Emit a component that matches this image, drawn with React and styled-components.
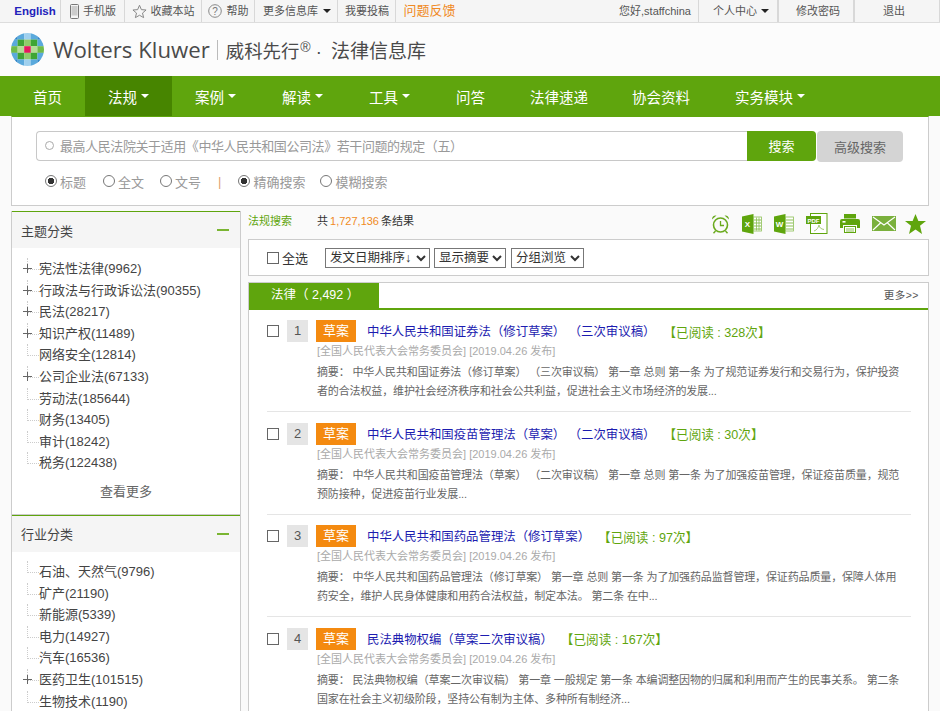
import React from "react";
import styled, { createGlobalStyle } from "styled-components";

const GlobalStyle = createGlobalStyle`
  html, body {
    margin: 0;
    padding: 0;
    height: 711px;
    overflow: hidden;
    background: #fafafa;
    font-family: "Liberation Sans", "Noto Sans CJK SC", sans-serif;
    font-size: 12px;
    color: #333;
    text-spacing-trim: space-all;
  }
  * { box-sizing: border-box; }
`;

const GREEN = "#5fa50d";

const TopBar = styled.div`
  height: 23px;
  background: #f5f5f5;
  border-bottom: 1px solid #ddd;
  display: flex;
  justify-content: space-between;
  font-size: 11px;
  line-height: 22px;
  color: #555;
`;

const TopGroup = styled.div`
  display: flex;
  height: 22px;
`;

const TopItem = styled.a`
  display: flex;
  align-items: center;
  justify-content: center;
  gap: ${props => props.$gap || 4}px;
  width: ${props => props.$w}px;
  padding: 0 ${props => props.$pr || 0}px 0 ${props => props.$pl || 0}px;
  border-right: ${props => (props.$plain ? "none" : "1px solid #d8d8d8")};
  border-left: ${props => (props.$left ? "1px solid #d8d8d8" : "none")};
  color: ${props => props.$color || "#555"};
  font-size: ${props => props.$size || 11}px;
  font-weight: ${props => (props.$bold ? 700 : 400)};
`;

const Caret = styled.i`
  display: inline-block;
  width: 0;
  height: 0;
  margin-left: ${props => props.$gap || 0}px;
  border-left: 4px solid transparent;
  border-right: 4px solid transparent;
  border-top: 4px solid ${props => props.$color || "#222"};
`;

const Header = styled.div`
  height: 53px;
  background: #fcfcfc;
  display: flex;
  align-items: center;
  padding-left: 11px;
`;

const Brand = styled.span`
  font-family: "Open Sans", "Liberation Sans", sans-serif;
  font-size: 22.2px;
  color: #4a4a4a;
  margin-left: 9px;
`;

const BrandRule = styled.span`
  width: 1px;
  height: 20px;
  background: #bbb;
  margin: 0 8px 0 7px;
`;

const BrandCn = styled.span`
  font-size: 18.4px;
  color: #4a4a4a;
  white-space: nowrap;
  sup {
    font-size: 14px;
    line-height: 0;
    vertical-align: 6px;
    margin: 0 0 0 1px;
  }
`;

const BrandName = styled.span`
  font-size: 19px;
  margin-left: 4px;
`;

const Nav = styled.nav`
  height: 40px;
  background: ${GREEN};
  display: flex;
  padding: 0 0 1px 10px;
  color: #fff;
  font-size: 14.5px;
`;

const NavItem = styled.a`
  display: flex;
  align-items: center;
  padding: 0 ${props => (props.$tight ? 22 : 23)}px;
  margin-bottom: -1px;
  background: ${props => (props.$active ? "#478500" : "transparent")};
  white-space: nowrap;
`;

const SearchPanel = styled.section`
  margin: 0 11px;
  height: 90px;
  background: #fff;
  border: 1px solid #ccc;
  border-top: 1px solid ${GREEN};
  padding: 14px 24px 0;
`;

const SearchRow = styled.div`
  display: flex;
  align-items: flex-start;
`;

const SearchBox = styled.div`
  flex: none;
  width: 711px;
  height: 30px;
  border: 1px solid #c8c8c8;
  border-right: none;
  border-radius: 4px 0 0 4px;
  display: flex;
  align-items: center;
  padding: 0 0 1px 8px;
  gap: 6px;
  color: #999;
  font-size: 13px;
  letter-spacing: -0.42px;
`;

const SearchGlass = styled.i`
  width: 9px;
  height: 9px;
  border: 1px solid #aaa;
  border-radius: 50%;
`;

const SearchBtn = styled.button`
  width: 69px;
  height: 30px;
  padding: 0 0 2px;
  border: none;
  border-radius: 0 4px 4px 0;
  background: ${GREEN};
  color: #fff;
  font: inherit;
  font-size: 13px;
`;

const AdvancedBtn = styled.button`
  width: 86px;
  height: 31px;
  margin-left: 1px;
  border: none;
  border-radius: 4px;
  background: #d4d4d4;
  color: #666;
  font: inherit;
  font-size: 13px;
`;

const OptionRow = styled.div`
  display: flex;
  align-items: center;
  height: 20px;
  margin-top: 9px;
  padding-left: 9px;
  color: #999;
  font-size: 13px;
`;

const Option = styled.label`
  display: flex;
  align-items: center;
  gap: 3px;
  margin-right: ${props => props.$mr || 16}px;
`;

const Radio = styled.input.attrs({ type: "radio" })`
  appearance: none;
  width: 12px;
  height: 12px;
  margin: 0;
  border: 1px solid #777;
  border-radius: 50%;
  background: #fff;
  &:checked {
    background: radial-gradient(circle, #333 0 3px, #fff 3.5px);
  }
`;

const OptionRule = styled.span`
  color: #e0a070;
  margin: 0 17px 0 1px;
`;

const Columns = styled.div`
  display: flex;
  align-items: flex-start;
  gap: 7px;
  margin: 5px 11px 0;
`;

const Sidebar = styled.aside`
  flex: none;
  width: 230px;
`;

const SidePanel = styled.div`
  background: #fff;
  border-left: 1px solid #ccc;
  border-right: 1px solid #ccc;
  border-bottom: 1px solid #ccc;
`;

const SideHead = styled.div`
  height: 37px;
  background: #f5f5f5;
  border-top: 1px solid ${GREEN};
  display: flex;
  align-items: center;
  justify-content: space-between;
  padding: 0 11px 0 9px;
  font-size: 13px;
  color: #444;
`;

const Collapse = styled.i`
  width: 12px;
  height: 2px;
  background: #7ab532;
`;

const TreeList = styled.ul`
  list-style: none;
  margin: 0;
  padding: ${props => props.$top || 9}px 0 0 15px;
`;

const TreeItem = styled.li`
  position: relative;
  height: 21.6px;
  line-height: 21.6px;
  padding-left: 12px;
  font-size: 13px;
  color: #444;
  white-space: nowrap;
  &::before {
    content: "";
    position: absolute;
    left: 0;
    top: 0;
    width: 11px;
    height: 11px;
    border-left: 1px dotted #ccc;
    border-bottom: 1px dotted #ccc;
  }
  &::after {
    content: ${props => (props.$plus ? '""' : "none")};
    position: absolute;
    left: -4px;
    top: 6px;
    width: 9px;
    height: 9px;
    background:
      linear-gradient(#666, #666) center / 9px 1px no-repeat,
      linear-gradient(#666, #666) center / 1px 9px no-repeat;
  }
`;

const ShowMore = styled.div`
  height: 40px;
  padding-top: 7px;
  text-align: center;
  font-size: 13px;
  color: #666;
`;

const Main = styled.main`
  flex: 1;
  min-width: 0;
`;

const ResultHead = styled.div`
  height: 28px;
  display: flex;
  align-items: flex-start;
  font-size: 11px;
  line-height: 20px;
  color: #333;
`;

const SearchLabel = styled.span`
  color: ${GREEN};
  width: 69px;
`;

const Count = styled.span`
  color: #f08a24;
  margin: 0 -1px;
`;

const IconBar = styled.div`
  margin: 2px 0 0 auto;
  display: flex;
  align-items: center;
  gap: 12px;
  padding-right: 3px;
`;

const StarSlot = styled.span`
  display: flex;
  margin-left: -3px;
`;

const Toolbar = styled.div`
  height: 37px;
  background: #fff;
  border: 1px solid #ccc;
  display: flex;
  align-items: center;
  padding-left: 18px;
  font-size: 13px;
`;

const Check = styled.input.attrs({ type: "checkbox" })`
  appearance: none;
  flex: none;
  width: 12px;
  height: 12px;
  margin: 0;
  border: 1px solid #666;
  background: #fff;
`;

const SelectAll = styled.label`
  display: flex;
  align-items: center;
  gap: 3px;
  margin-right: 17px;
  color: #333;
`;

const Select = styled.select`
  width: ${props => props.$w}px;
  height: 20px;
  margin-right: ${props => props.$mr || 4}px;
  padding: 0;
  border: 1px solid #777;
  border-radius: 0;
  background: #fff;
  color: #333;
  font: inherit;
  font-size: 12.5px;
`;

const ResultsCard = styled.div`
  margin-top: 6px;
  background: #fff;
  border: 1px solid #ccc;
  border-bottom: none;
`;

const TabRow = styled.div`
  height: 27px;
  border-bottom: 2px solid ${GREEN};
  display: flex;
  justify-content: space-between;
`;

const Tab = styled.div`
  width: 130px;
  background: ${GREEN};
  color: #fff;
  font-size: 12.5px;
  line-height: 25px;
  padding-left: 22px;
`;

const MoreLink = styled.a`
  font-size: 10.5px;
  color: #555;
  line-height: 24px;
  padding-right: 9px;
  letter-spacing: 0.5px;
`;

const ResultList = styled.div`
  padding: 10px 17px 0 18px;
`;

const Result = styled.article`
  height: 92px;
  margin-bottom: 10.5px;
  border-bottom: 1px solid #e5e5e5;
`;

const ResultTitleRow = styled.div`
  display: flex;
  align-items: center;
  height: 22px;
`;

const NumberBox = styled.span`
  width: 21px;
  height: 22px;
  margin: 0 8px;
  background: #e5e5e5;
  color: #555;
  text-align: center;
  line-height: 22px;
  font-size: 13px;
`;

const Badge = styled.span`
  width: 40px;
  height: 22px;
  background: #f48a10;
  color: #fff;
  text-align: center;
  line-height: 22px;
  font-size: 13px;
  margin-right: 11px;
`;

const TitleLink = styled.a`
  color: #1c1cb0;
  font-size: 12.4px;
  white-space: nowrap;
`;

const ReadCount = styled.span`
  color: ${GREEN};
  font-size: 12.6px;
  margin-left: 8px;
  white-space: nowrap;
`;

const Meta = styled.div`
  margin: 1px 0 0 50px;
  font-size: 11px;
  line-height: 16px;
  color: #aaa;
`;

const Summary = styled.p`
  margin: 4px 0 0 50px;
  width: 584px;
  font-size: 11px;
  line-height: 19px;
  letter-spacing: -0.14px;
  color: #666;
`;

const logoCells = [
  ["#2f86c8", "#5aa9dc", "#9fd0ee", "#5aa9dc", "#2f86c8"],
  ["#5aa9dc", "#3fa535", "#8fcb6a", "#3fa535", "#5aa9dc"],
  ["#6fbb4a", "#b5dc98", "#e5175e", "#b5dc98", "#6fbb4a"],
  ["#5aa9dc", "#3fa535", "#8fcb6a", "#3fa535", "#5aa9dc"],
  ["#2f86c8", "#5aa9dc", "#9fd0ee", "#5aa9dc", "#2f86c8"],
];

const Logo = () => (
  <svg width="33" height="33" viewBox="0 0 33 33">
    <defs>
      <clipPath id="wk-circle">
        <circle cx="16.500" cy="16.500" r="16.500" />
      </clipPath>
    </defs>
    <g clipPath="url(#wk-circle)">
      {logoCells.map((row, y) =>
        row.map((fill, x) => (
          <rect key={`${x}-${y}`} x={x * 6.6} y={y * 6.6} width="6.700" height="6.700" fill={fill} />
        ))
      )}
    </g>
  </svg>
);

const PhoneIcon = () => (
  <svg width="9" height="15" viewBox="0 0 9 15">
    <rect x="0.500" y="0.500" width="8" height="14" rx="1" fill="none" stroke="#777" />
    <rect x="1.500" y="2" width="6" height="9.500" fill="#ccc" />
  </svg>
);

const StarOutline = () => (
  <svg width="15" height="15" viewBox="0 0 24 24">
    <path d="M12 2l3 7 7.500.6-5.700 4.900 1.800 7.300L12 18l-6.600 3.800 1.800-7.300L1.500 9.600 9 9z" fill="none" stroke="#888" strokeWidth="1.600" />
  </svg>
);

const HelpIcon = () => (
  <svg width="14" height="14" viewBox="0 0 14 14">
    <circle cx="7" cy="7" r="6.300" fill="none" stroke="#888" />
    <text x="7" y="10.500" textAnchor="middle" fontSize="10" fill="#777" fontFamily="Liberation Sans">?</text>
  </svg>
);

const AlarmIcon = () => (
  <svg width="19" height="20" viewBox="0 0 19 20">
    <circle cx="9.500" cy="11" r="7" fill="none" stroke="#6aaa1e" strokeWidth="1.600" />
    <path d="M9.500 7v4.500H13" fill="none" stroke="#6aaa1e" strokeWidth="1.300" />
    <path d="M1 5.500C1 2.500 3 1 5.500 1.500zM18 5.500C18 2.500 16 1 13.500 1.500z" fill="#6aaa1e" />
    <path d="M4.500 17l-2 2.200M14.500 17l2 2.200" stroke="#6aaa1e" strokeWidth="1.400" />
  </svg>
);

const SheetIcon = ({ letter }) => (
  <svg width="20" height="20" viewBox="0 0 20 20">
    <path d="M0 2.500L11.500 0v20L0 17.500z" fill="#5fa50d" />
    <rect x="11.500" y="3" width="8" height="14" fill="#fff" stroke="#8cbf55" strokeWidth="0.800" />
    {[6, 9, 12, 15].map(y => <path key={y} d={`M12 ${y}h7`} stroke="#8cbf55" strokeWidth="1" />)}
    {letter === "X" && <path d="M14.500 3.500v13M17 3.500v13" stroke="#8cbf55" strokeWidth="0.800" />}
    <text x="5.500" y="13" textAnchor="middle" fontSize="8" fontWeight="700" fill="#fff" fontFamily="Liberation Sans">{letter}</text>
  </svg>
);

const PdfIcon = () => (
  <svg width="22" height="21" viewBox="0 0 22 21">
    <rect x="4.500" y="0.500" width="16.500" height="20" fill="#fff" stroke="#5fa50d" />
    <rect x="0" y="3" width="15" height="8" fill="#5fa50d" />
    <text x="7.500" y="9.500" textAnchor="middle" fontSize="6" fontWeight="700" fill="#fff" fontFamily="Liberation Sans">PDF</text>
    <path d="M8 18c3-1 4-3 5-6 .5 3 2 4 5 4.500" fill="none" stroke="#a6cc78" />
  </svg>
);

const PrintIcon = () => (
  <svg width="20" height="19" viewBox="0 0 20 19">
    <rect x="4" y="0" width="12" height="4.500" fill="#5fa50d" />
    <path d="M0 7a2 2 0 0 1 2-2h16a2 2 0 0 1 2 2v7h-3v-3H3v3H0z" fill="#5fa50d" />
    <rect x="4.500" y="12.500" width="11" height="6" fill="#fff" stroke="#5fa50d" />
    <rect x="2.500" y="7" width="3" height="1.600" fill="#fff" />
    <path d="M6 15h8M6 17h8" stroke="#8cbf55" />
  </svg>
);

const MailIcon = () => (
  <svg width="24" height="15" viewBox="0 0 24 15">
    <rect width="24" height="15" fill="#7ab03c" />
    <path d="M1 1l11 8 11-8M1 14l8-7.500M23 14l-8-7.500" fill="none" stroke="#fff" strokeWidth="1.100" />
  </svg>
);

const StarIcon = () => (
  <svg width="21" height="20" viewBox="0 0 21 20">
    <path d="M10.500 0l2.900 7H21l-6 4.800L17 20l-6.500-4.600L4 20l2-8.200L0 7h7.600z" fill="#5fa50d" />
  </svg>
);

const topics = [
  ["宪法性法律(9962)", true],
  ["行政法与行政诉讼法(90355)", true],
  ["民法(28217)", true],
  ["知识产权(11489)", true],
  ["网络安全(12814)", false],
  ["公司企业法(67133)", true],
  ["劳动法(185644)", false],
  ["财务(13405)", false],
  ["审计(18242)", false],
  ["税务(122438)", false],
];

const industries = [
  ["石油、天然气(9796)", false],
  ["矿产(21190)", false],
  ["新能源(5339)", false],
  ["电力(14927)", false],
  ["汽车(16536)", false],
  ["医药卫生(101515)", true],
  ["生物技术(1190)", false],
];

const results = [
  {
    title: "中华人民共和国证券法（修订草案） （三次审议稿）",
    read: "【已阅读 : 328次】",
    summary: "摘要： 中华人民共和国证券法（修订草案） （三次审议稿） 第一章 总则 第一条 为了规范证券发行和交易行为，保护投资者的合法权益，维护社会经济秩序和社会公共利益，促进社会主义市场经济的发展...",
  },
  {
    title: "中华人民共和国疫苗管理法（草案） （二次审议稿）",
    read: "【已阅读 : 30次】",
    summary: "摘要： 中华人民共和国疫苗管理法（草案） （二次审议稿） 第一章 总则 第一条 为了加强疫苗管理，保证疫苗质量，规范预防接种，促进疫苗行业发展...",
  },
  {
    title: "中华人民共和国药品管理法（修订草案）",
    read: "【已阅读 : 97次】",
    summary: "摘要： 中华人民共和国药品管理法（修订草案） 第一章 总则 第一条 为了加强药品监督管理，保证药品质量，保障人体用药安全，维护人民身体健康和用药合法权益，制定本法。 第二条 在中...",
  },
  {
    title: "民法典物权编（草案二次审议稿）",
    read: "【已阅读 : 167次】",
    summary: "摘要： 民法典物权编（草案二次审议稿） 第一章 一般规定 第一条 本编调整因物的归属和利用而产生的民事关系。 第二条 国家在社会主义初级阶段，坚持公有制为主体、多种所有制经济...",
  },
];

const App = () => (
  <>
    <GlobalStyle />
    <TopBar>
      <TopGroup>
        <TopItem $w={61} $bold $color="#2222bb" $size={11.5} $pl={10}>English</TopItem>
        <TopItem $w={64} $pl={1}><PhoneIcon />手机版</TopItem>
        <TopItem $w={77}><StarOutline />收藏本站</TopItem>
        <TopItem $w={53} $gap={5}><HelpIcon />帮助</TopItem>
        <TopItem $w={83} $pl={2} $gap={2}>更多信息库<Caret $gap={3} /></TopItem>
        <TopItem $w={58} $pl={1}>我要投稿</TopItem>
        <TopItem $w={65} $plain $color="#f08a24" $size={13} $pl={2}>问题反馈</TopItem>
      </TopGroup>
      <TopGroup>
        <TopItem $w={91} $plain $pl={5}>您好,staffchina</TopItem>
        <TopItem $w={80} $left $pl={6} $gap={1}>个人中心<Caret $gap={3} /></TopItem>
        <TopItem $w={76} $left $pl={4}>修改密码</TopItem>
        <TopItem $w={86} $left $pr={6}>退出</TopItem>
      </TopGroup>
    </TopBar>
    <Header>
      <Logo />
      <Brand>Wolters Kluwer</Brand>
      <BrandRule />
      <BrandCn>威科先行<sup>®</sup> · <BrandName>法律信息库</BrandName></BrandCn>
    </Header>
    <Nav>
      <NavItem>首页</NavItem>
      <NavItem $active>法规<Caret $gap={4} $color="#fff" /></NavItem>
      <NavItem>案例<Caret $gap={4} $color="#fff" /></NavItem>
      <NavItem>解读<Caret $gap={4} $color="#fff" /></NavItem>
      <NavItem>工具<Caret $gap={4} $color="#fff" /></NavItem>
      <NavItem>问答</NavItem>
      <NavItem $tight>法律速递</NavItem>
      <NavItem $tight>协会资料</NavItem>
      <NavItem>实务模块<Caret $gap={4} $color="#fff" /></NavItem>
    </Nav>
    <SearchPanel>
      <SearchRow>
        <SearchBox>
          <SearchGlass />
          最高人民法院关于适用《中华人民共和国公司法》若干问题的规定（五）
        </SearchBox>
        <SearchBtn>搜索</SearchBtn>
        <AdvancedBtn>高级搜索</AdvancedBtn>
      </SearchRow>
      <OptionRow>
        <Option $mr={17}><Radio name="scope" defaultChecked />标题</Option>
        <Option $mr={16}><Radio name="scope" />全文</Option>
        <Option $mr={16}><Radio name="scope" />文号</Option>
        <OptionRule>|</OptionRule>
        <Option $mr={15}><Radio name="mode" defaultChecked />精确搜索</Option>
        <Option><Radio name="mode" />模糊搜索</Option>
      </OptionRow>
    </SearchPanel>
    <Columns>
      <Sidebar>
        <SidePanel>
          <SideHead>主题分类<Collapse /></SideHead>
          <TreeList $top={10}>
            {topics.map(([label, plus]) => <TreeItem key={label} $plus={plus}>{label}</TreeItem>)}
          </TreeList>
          <ShowMore>查看更多</ShowMore>
        </SidePanel>
        <SidePanel>
          <SideHead>行业分类<Collapse /></SideHead>
          <TreeList>
            {industries.map(([label, plus]) => <TreeItem key={label} $plus={plus}>{label}</TreeItem>)}
          </TreeList>
        </SidePanel>
      </Sidebar>
      <Main>
        <ResultHead>
          <SearchLabel>法规搜索</SearchLabel>
          共<Count>&nbsp;1,727,136&nbsp;</Count>条结果
          <IconBar>
            <AlarmIcon />
            <SheetIcon letter="X" />
            <SheetIcon letter="W" />
            <PdfIcon />
            <PrintIcon />
            <MailIcon />
            <StarSlot><StarIcon /></StarSlot>
          </IconBar>
        </ResultHead>
        <Toolbar>
          <SelectAll><Check />全选</SelectAll>
          <Select $w={105}><option>发文日期排序↓</option></Select>
          <Select $w={72} $mr={5}><option>显示摘要</option></Select>
          <Select $w={73}><option>分组浏览</option></Select>
        </Toolbar>
        <ResultsCard>
          <TabRow>
            <Tab>法律（ 2,492 ）</Tab>
            <MoreLink>更多&gt;&gt;</MoreLink>
          </TabRow>
          <ResultList>
            {results.map((item, i) => (
              <Result key={item.title}>
                <ResultTitleRow>
                  <Check />
                  <NumberBox>{i + 1}</NumberBox>
                  <Badge>草案</Badge>
                  <TitleLink>{item.title}</TitleLink>
                  <ReadCount>{item.read}</ReadCount>
                </ResultTitleRow>
                <Meta>[全国人民代表大会常务委员会] [2019.04.26 发布]</Meta>
                <Summary>{item.summary}</Summary>
              </Result>
            ))}
          </ResultList>
        </ResultsCard>
      </Main>
    </Columns>
  </>
);

export default App;
